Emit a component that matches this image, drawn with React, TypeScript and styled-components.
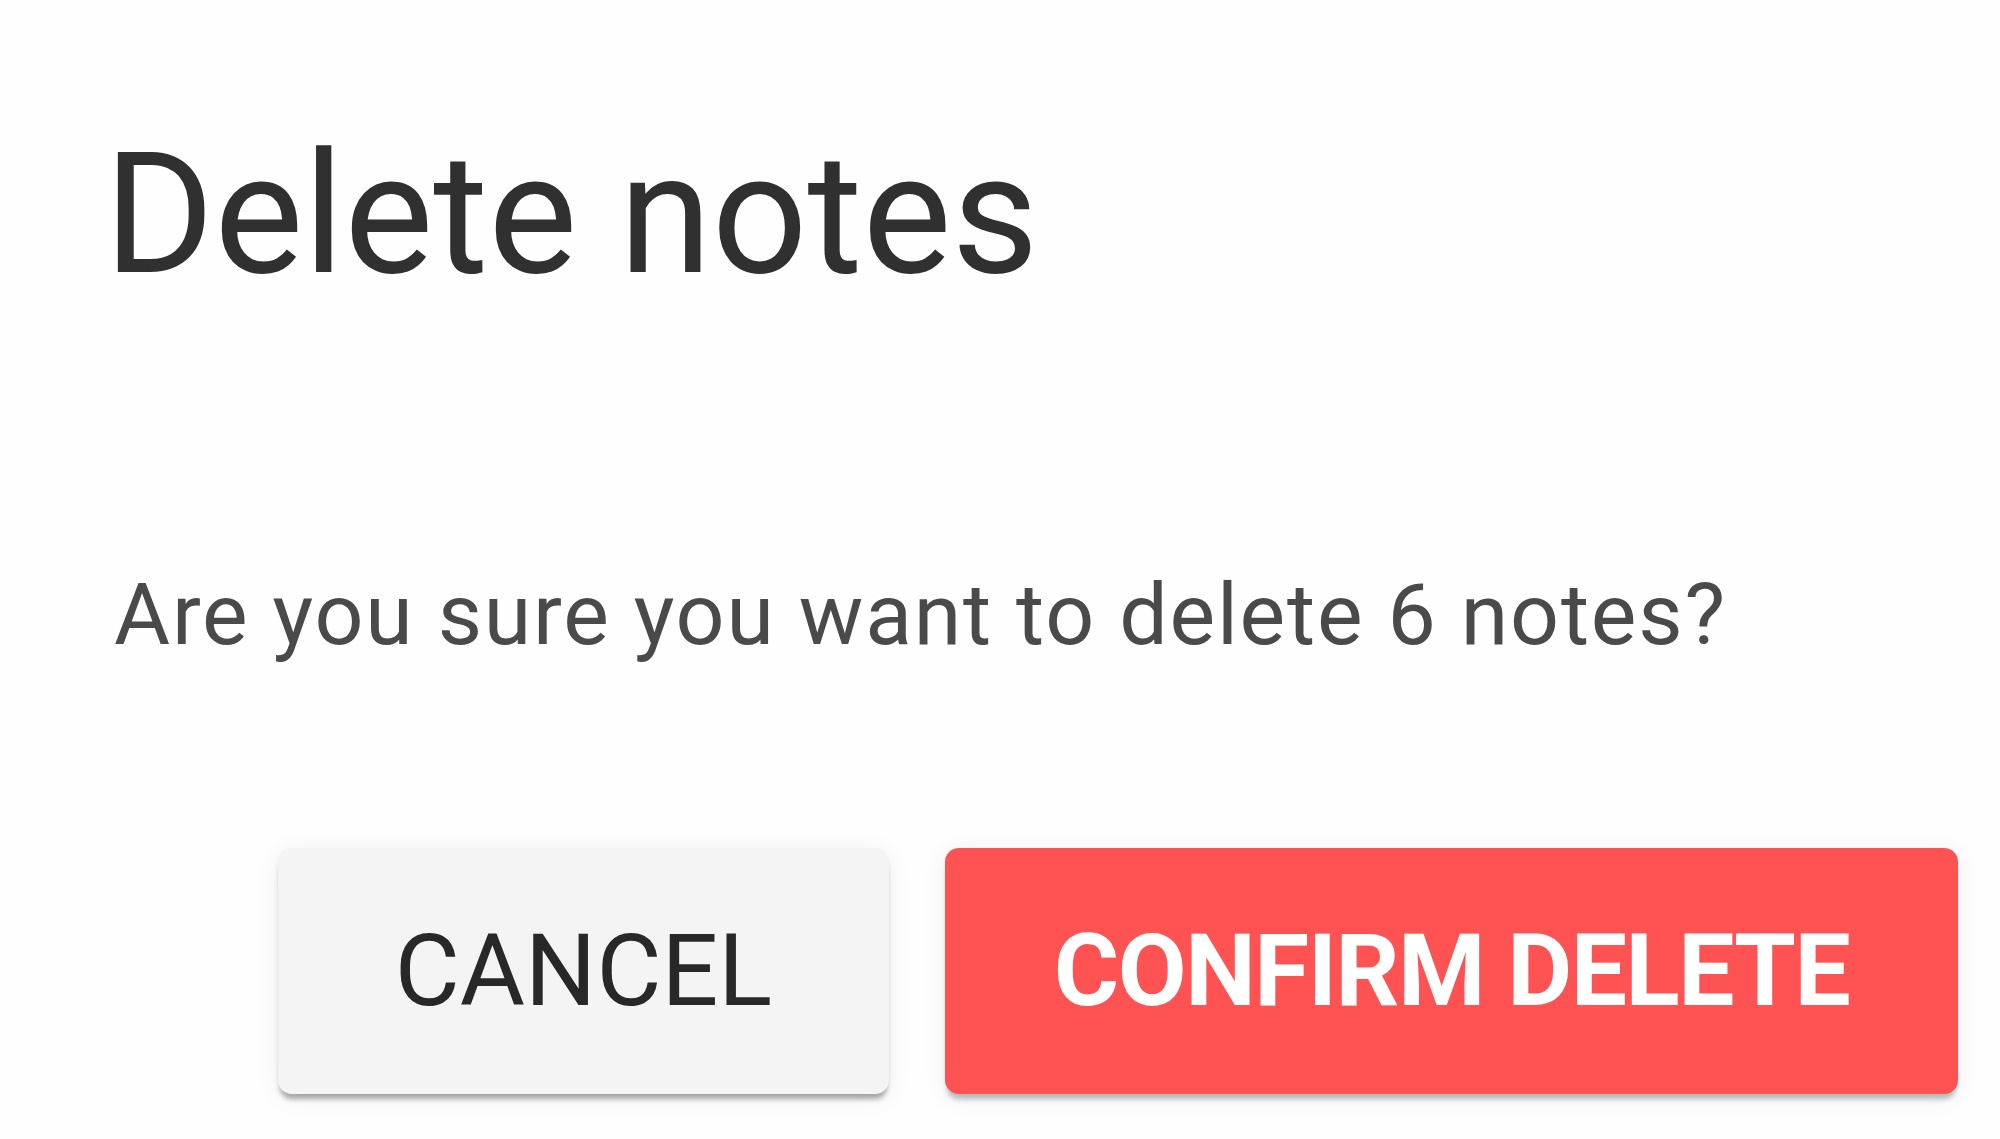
import React from 'react';
import styled, { createGlobalStyle } from 'styled-components';

const GlobalStyle = createGlobalStyle`
	html, body {
		margin: 0;
		padding: 0;
		background-color: #fff;
	}
	body {
		font-family: Roboto, 'Liberation Sans', Arial, sans-serif;
	}
`;

const DeleteDialog = () => {
	return (
		<DialogPaper>
			<DialogTitle>Delete notes</DialogTitle>
			<DialogContentText>Are you sure you want to delete 6 notes?</DialogContentText>
			<DialogActions>
				<ActionButton width={611}>CANCEL</ActionButton>
				<ActionButton width={1013} danger>
					CONFIRM DELETE
				</ActionButton>
			</DialogActions>
		</DialogPaper>
	);
};

const App = () => (
	<>
		<GlobalStyle />
		<DeleteDialog />
	</>
);

const DialogPaper = styled.div`
	box-sizing: border-box;
	width: 2000px;
	height: 1139px;
	display: flex;
	flex-direction: column;
	background-color: #fefefe;
	overflow: hidden;
`;

const DialogTitle = styled.h2`
	margin: 131px 0 0 104px;
	font-size: 168px;
	line-height: 1;
	font-weight: 400;
	color: #303030;
	white-space: nowrap;
`;

const DialogContentText = styled.p`
	margin: 273px 0 0 114px;
	font-size: 86px;
	line-height: 1;
	font-weight: 400;
	letter-spacing: 1.8px;
	color: #4a4a4a;
	white-space: nowrap;
`;

const DialogActions = styled.div`
	display: flex;
	justify-content: flex-end;
	gap: 56px;
	margin-top: 190px;
	padding-right: 42px;
`;

const ActionButton = styled.button<{ danger?: boolean; width: number }>`
	box-sizing: border-box;
	width: ${(p) => p.width}px;
	height: 246px;
	padding: 0;
	display: flex;
	align-items: center;
	justify-content: center;
	border: none;
	border-radius: 14px;
	font-family: Roboto, 'Liberation Sans', Arial, sans-serif;
	font-size: 100px;
	line-height: 1;
	font-weight: ${(p) => (p.danger ? 700 : 400)};
	letter-spacing: ${(p) => (p.danger ? '-1.5px' : '0')};
	white-space: nowrap;
	color: ${(p) => (p.danger ? '#fff' : '#282828')};
	background-color: ${(p) => (p.danger ? '#ff5252' : '#f4f4f4')};
	box-shadow: ${(p) =>
		p.danger
			? '0 7px 5px -2px rgba(40, 80, 80, 0.35), 0 4px 24px rgba(0, 40, 40, 0.07)'
			: '0 7px 5px -2px rgba(0, 0, 0, 0.32), 0 4px 24px rgba(0, 0, 0, 0.07)'};
	cursor: pointer;
`;

export default App;
